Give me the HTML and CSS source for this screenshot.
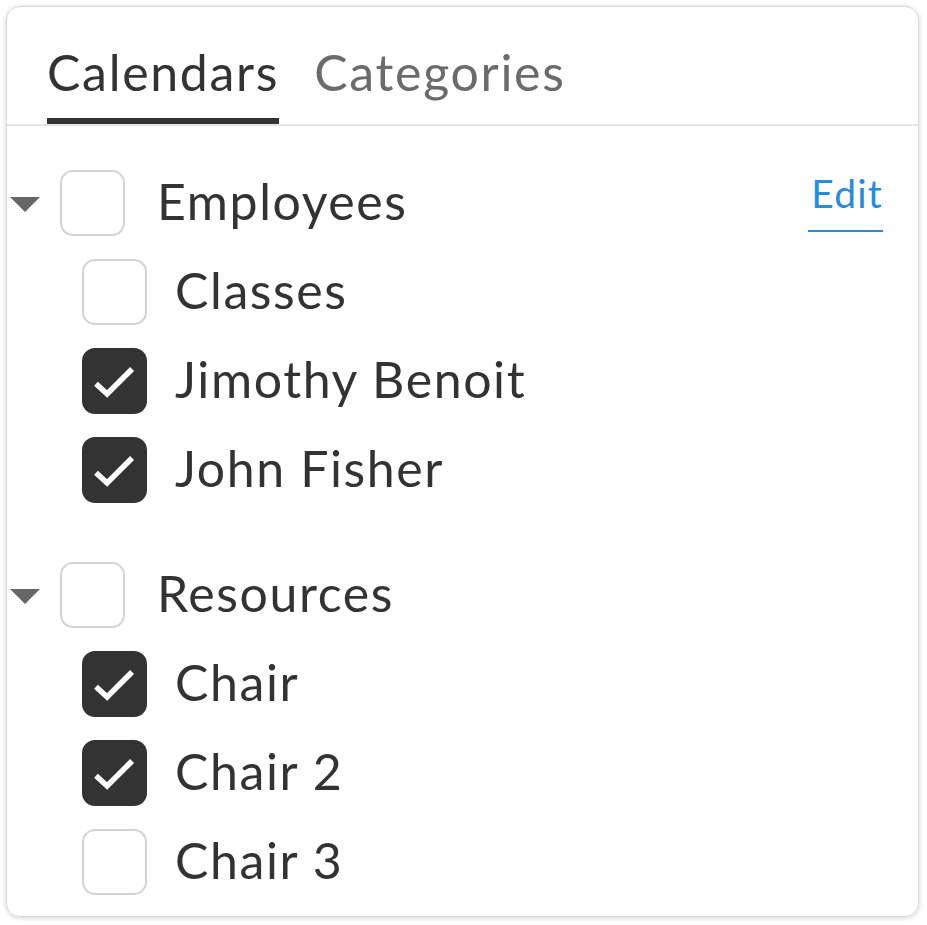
FILE: index.html
```html
<!DOCTYPE html>
<html>
<head>
<meta charset="utf-8">
<link rel="stylesheet" href="styles.css">
</head>
<body>
<div class="card">
  <div class="tabs">
    <div class="tab active">Calendars</div>
    <div class="tab">Categories</div>
  </div>
  <div class="list">
    <div class="group">
      <div class="row header">
        <span class="caret"></span>
        <span class="box"></span>
        <span class="label">Employees</span>
        <a class="edit">Edit</a>
      </div>
      <div class="row child"><span class="box"></span><span class="label">Classes</span></div>
      <div class="row child"><span class="box checked"><svg viewBox="0 0 66 66"><path d="M13 36 L25 47 L52 20"/></svg></span><span class="label">Jimothy Benoit</span></div>
      <div class="row child"><span class="box checked"><svg viewBox="0 0 66 66"><path d="M13 36 L25 47 L52 20"/></svg></span><span class="label">John Fisher</span></div>
    </div>
    <div class="group">
      <div class="row header">
        <span class="caret"></span>
        <span class="box"></span>
        <span class="label">Resources</span>
      </div>
      <div class="row child"><span class="box checked"><svg viewBox="0 0 66 66"><path d="M13 36 L25 47 L52 20"/></svg></span><span class="label">Chair</span></div>
      <div class="row child"><span class="box checked"><svg viewBox="0 0 66 66"><path d="M13 36 L25 47 L52 20"/></svg></span><span class="label">Chair 2</span></div>
      <div class="row child"><span class="box"></span><span class="label">Chair 3</span></div>
    </div>
  </div>
</div>
</body>
</html>
```

FILE: styles.css
```css
html, body {
  margin: 0;
  padding: 0;
  background: #fff;
}
body {
  font-family: Lato, "Open Sans", sans-serif;
  color: #333;
}
.card {
  margin: 6px;
  width: 913px;
  height: 911px;
  border: 1px solid #d8d8d8;
  border-radius: 14px;
  box-shadow: 0 1px 5px rgba(0,0,0,0.18);
  box-sizing: border-box;
  overflow: hidden;
}
.tabs {
  display: flex;
  gap: 35px;
  padding-left: 40px;
  border-bottom: 2px solid #e6e6e6;
  height: 117px;
  box-sizing: content-box;
}
.tab {
  font-size: 50px;
  letter-spacing: 1.7px;
  color: #6b6b6b;
  padding-top: 35px;
  box-sizing: border-box;
  height: 117px;
}
.tab.active {
  color: #333;
  border-bottom: 6px solid #333;
  letter-spacing: 1.7px;
}
.list {
  padding-top: 32px;
  display: flex;
  flex-direction: column;
  gap: 36px;
}
.row {
  height: 89px;
  display: flex;
  align-items: center;
  font-size: 50px;
  letter-spacing: 1.6px;
}
.label {
  padding-bottom: 4px;
}
.caret {
  width: 0;
  height: 0;
  border-left: 15px solid transparent;
  border-right: 15px solid transparent;
  border-top: 15px solid #666;
  margin-left: 3px;
  margin-right: 20px;
  margin-top: 3px;
}
.box {
  width: 65px;
  height: 66px;
  box-sizing: border-box;
  border: 2px solid #d4d4d4;
  border-radius: 13px;
  background: #fff;
  flex: none;
  display: flex;
}
.box.checked {
  background: #333;
  border-color: #333;
}
.box svg {
  width: 100%;
  height: 100%;
}
.box svg path {
  fill: none;
  stroke: #fff;
  stroke-width: 6;
  stroke-linecap: butt;
  stroke-linejoin: miter;
}
.header .label {
  margin-left: 32px;
}
.child {
  padding-left: 75px;
}
.child .label {
  margin-left: 28px;
}
.edit {
  margin-left: auto;
  margin-right: 35px;
  font-size: 39px;
  letter-spacing: 1.2px;
  color: #2b8bd8;
  border-bottom: 2px solid #2b8bd8;
  padding-left: 3px;
  padding-bottom: 14px;
  align-self: flex-start;
  margin-top: 12px;
}
```
